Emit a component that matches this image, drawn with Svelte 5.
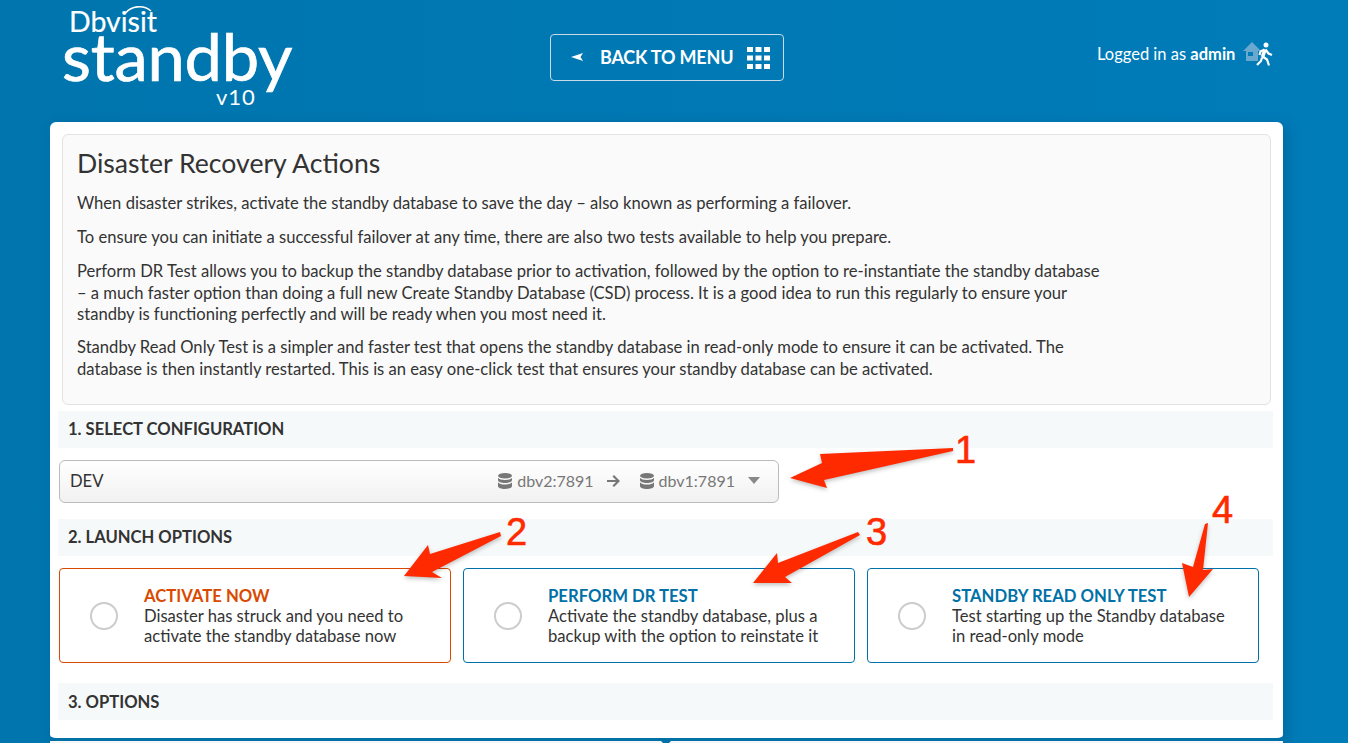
<script>
	const configs = [{ host: 'dbv2:7891' }, { host: 'dbv1:7891' }];

	const options = [
		{
			title: 'ACTIVATE NOW',
			lines: ['Disaster has struck and you need to', 'activate the standby database now'],
			danger: true
		},
		{
			title: 'PERFORM DR TEST',
			lines: ['Activate the standby database, plus a', 'backup with the option to reinstate it']
		},
		{
			title: 'STANDBY READ ONLY TEST',
			lines: ['Test starting up the Standby database', 'in read-only mode']
		}
	];

	const arrows = [
		'953,448 820,454 822,463 790,478 827,488 824,480 953,451',
		'500,532 430,554 428,545 404,576 442,578 432,572 501,536',
		'858,532 778,563 777,553 753,583 792,583 785,577 860,535',
		'1208,523 1203,570 1213,569 1189,597 1182,563 1193,567 1205,524'
	];
</script>

<div class="page">
	<header>
		<div class="logo">
			<div class="brand">Dbvisit</div>
			<svg class="swoosh" viewBox="0 0 28 10" width="28" height="10">
				<path d="M1 8.500C6 2.500 18 0 26 7" fill="none" stroke="#fff" stroke-width="1.600" />
			</svg>
			<div class="product">standby</div>
			<div class="version">v10</div>
		</div>

		<button class="back">
			<svg class="back-arrow" viewBox="0 0 12 8" width="12" height="8">
				<path d="M0 4 12 0 9.500 4 12 8z" fill="#fff" />
			</svg>
			<span>BACK TO MENU</span>
			<svg class="grid" viewBox="0 0 23 22" width="23" height="22" fill="#fff">
				{#each [0, 8.5, 17] as y}
					{#each [0, 8.5, 17] as x}
						<rect {x} {y} width="6" height="5" />
					{/each}
				{/each}
			</svg>
		</button>

		<div class="user">
			<span>Logged in as <b>admin</b></span>
			<svg viewBox="0 0 30 24" width="30" height="24">
				<path d="M0 9 9 0l9 9h-3v10H3V9zM5 10v4h5v-4z" fill="#6aa9cf" fill-rule="evenodd" />
				<circle cx="23" cy="3" r="2.500" fill="#fff" />
				<path d="M22 7.500 19.500 15" fill="none" stroke="#fff" stroke-width="3.600" />
				<path
					d="M19.500 14.500 24 17.500 26 23.500M19 15.500 18 19 14 23M21.500 7.500 17.500 9.500 16.500 13M22.500 7.500 25.500 11.500 29 13"
					fill="none"
					stroke="#fff"
					stroke-width="2.200"
				/>
			</svg>
		</div>
	</header>

	<main>
		<section class="intro">
			<h1>Disaster Recovery Actions</h1>
			<p>When disaster strikes, activate the standby database to save the day – also known as performing a failover.</p>
			<p>To ensure you can initiate a successful failover at any time, there are also two tests available to help you prepare.</p>
			<p class="long">Perform DR Test allows you to backup the standby database prior to activation, followed by the option to re-instantiate the standby database – a much faster option than doing a full new Create Standby Database (CSD) process. It is a good idea to run this regularly to ensure your standby is functioning perfectly and will be ready when you most need it.</p>
			<p>Standby Read Only Test is a simpler and faster test that opens the standby database in read-only mode to ensure it can be activated. The database is then instantly restarted. This is an easy one-click test that ensures your standby database can be activated.</p>
		</section>

		<h2>1. SELECT CONFIGURATION</h2>
		<div class="select">
			<span class="name">DEV</span>
			<div class="route">
				{#each configs as c, i}
					{#if i > 0}
						<svg class="to" viewBox="0 0 14 12" width="14" height="12">
							<path d="M0 5h9L5.500 1.500 7 0l6 6-6 6-1.500-1.500L9 7H0z" fill="#777" />
						</svg>
					{/if}
					<span class="host">
						<svg viewBox="0 0 14 16" width="14" height="16" fill="#777">
							<ellipse cx="7" cy="2.800" rx="7" ry="2.800" />
							<path d="M0 4.800v2.400c0 1.500 3.100 2.800 7 2.800s7-1.300 7-2.800V4.800C13 6.300 10.300 7 7 7S1 6.300 0 4.800z" />
							<path d="M0 9.300v3.700C0 14.700 3.100 16 7 16s7-1.300 7-3V9.300C13 10.800 10.300 11.600 7 11.600S1 10.800 0 9.300z" />
						</svg>
						{c.host}
					</span>
				{/each}
				<span class="caret"></span>
			</div>
		</div>

		<h2 class="launch">2. LAUNCH OPTIONS</h2>
		<div class="options">
			{#each options as o}
				<label class="option" class:danger={o.danger}>
					<span class="radio"></span>
					<span class="text">
						<strong>{o.title}</strong>
						{#each o.lines as line}
							<span>{line}</span>
						{/each}
					</span>
				</label>
			{/each}
		</div>

		<h2 class="extra">3. OPTIONS</h2>
	</main>
	<div class="next"><span class="notch"></span></div>

	<svg class="notes" viewBox="0 0 1348 743" width="1348" height="743">
		{#each arrows as points}
			<polygon {points} />
		{/each}
		<text x="955" y="463">1</text>
		<text x="506" y="545">2</text>
		<text x="866" y="545">3</text>
		<text x="1212" y="523">4</text>
	</svg>
</div>

<style>
	:global(html),
	:global(body) {
		margin: 0;
		height: 743px;
		overflow: hidden;
	}

	.page {
		position: relative;
		height: 743px;
		overflow: hidden;
		background: linear-gradient(90deg, #0075ae, #007cb9);
		font-family: Lato, 'Open Sans', sans-serif;
		font-size: 16.600px;
		color: #333;
	}

	header {
		display: flex;
		align-items: flex-start;
		height: 122px;
		color: #fff;
	}

	.logo {
		position: relative;
		width: 487px;
		height: 122px;
		margin-left: 63px;
		line-height: 1;
	}

	.brand {
		margin: 7px 0 0 6px;
		font-size: 28.500px;
		-webkit-text-stroke: 0.2px #fff;
	}

	.swoosh {
		position: absolute;
		top: 4px;
		left: 62px;
	}

	.product {
		margin: -10px 0 0 -1px;
		font-size: 66.800px;
		line-height: 58px;
		letter-spacing: -0.2px;
		-webkit-text-stroke: 0.7px #fff;
	}

	.version {
		margin: 2px 0 0 153px;
		font-size: 22px;
		letter-spacing: 1px;
	}

	.back {
		display: flex;
		align-items: center;
		box-sizing: border-box;
		width: 234px;
		height: 47px;
		margin-top: 34px;
		padding: 0 13px 2px 20px;
		background: none;
		border: 1px solid #c8dbe6;
		border-radius: 4px;
		color: #fff;
		font: 700 18px Lato, sans-serif;
		letter-spacing: -0.2px;
	}

	.back-arrow {
		margin-right: 17px;
	}

	.grid {
		margin-left: auto;
		margin-top: 2px;
	}

	.user {
		display: flex;
		align-items: center;
		gap: 8px;
		margin: 42px 0 0 313px;
		font-size: 16.500px;
	}

	.user span {
		margin-top: -1px;
	}

	main {
		box-sizing: border-box;
		width: 1233px;
		height: 619px;
		margin-left: 50px;
		padding: 12px 10px 0 8px;
		background: #fff;
		border-bottom: 3px solid #0071a7;
		border-radius: 6px;
		box-shadow: 4px 4px 14px rgba(0, 50, 80, 0.25);
	}

	.intro {
		box-sizing: border-box;
		height: 271px;
		margin: 0 2px 6px 4px;
		padding: 13px 14px;
		background: #fafafa;
		border: 1px solid #e3e3e3;
		border-radius: 6px;
	}

	h1 {
		margin: 0 0 15px;
		font-size: 26.600px;
		font-weight: 400;
		line-height: 30px;
	}

	p {
		max-width: 1030px;
		margin: 0 0 12.500px;
		line-height: 21.500px;
	}

	.long {
		margin-bottom: 11.500px;
	}

	h2 {
		margin: 0;
		padding: 0 10px;
		background: #f6f9fa;
		font-size: 16.600px;
		font-weight: 700;
		line-height: 37px;
	}

	.launch {
		margin-top: 16px;
	}

	.extra {
		margin-top: 20px;
		padding-top: 2px;
		line-height: 35px;
	}

	.select {
		display: flex;
		align-items: center;
		box-sizing: border-box;
		width: 720px;
		height: 43px;
		margin: 12px 0 0 1px;
		padding: 0 18px 2px 10px;
		background: linear-gradient(#fff, #f1f1f1);
		border: 1px solid #bbb;
		border-radius: 6px;
	}

	.route {
		display: flex;
		align-items: center;
		margin-left: auto;
		color: #777;
		font-size: 16px;
	}

	.host {
		display: flex;
		align-items: center;
		gap: 5px;
	}

	.to {
		margin: 0 19px 0 13px;
	}

	.caret {
		margin-left: 13px;
		border: 6px solid transparent;
		border-top: 7px solid #888;
		border-bottom: 0;
	}

	.options {
		display: flex;
		gap: 12px;
		margin: 12px 0 0 1px;
	}

	.option {
		display: flex;
		align-items: center;
		box-sizing: border-box;
		width: 392px;
		height: 95px;
		padding: 0 0 0 30px;
		border: 1px solid #0071a7;
		border-radius: 4px;
	}

	.radio {
		box-sizing: border-box;
		width: 28px;
		height: 28px;
		margin-right: 26px;
		border: 2px solid #ccc;
		border-radius: 50%;
	}

	.text {
		display: flex;
		flex-direction: column;
		line-height: 20px;
	}

	.text strong {
		color: #0071a7;
		font-size: 16.700px;
	}

	.danger {
		border-color: #d94a00;
	}

	.danger strong {
		color: #d94a00;
	}

	.next {
		position: relative;
		width: 1233px;
		height: 2px;
		margin-left: 50px;
		background: #f4f6f7;
	}

	.notch {
		position: absolute;
		top: 0;
		left: 611px;
		border: 5px solid transparent;
		border-top: 5px solid #0071a7;
		border-bottom: 0;
	}

	.notes {
		position: absolute;
		top: 0;
		left: 0;
		pointer-events: none;
	}

	.notes polygon {
		fill: #ff2a00;
		filter: drop-shadow(0 2px 2px rgba(0, 0, 0, 0.25));
	}

	.notes text {
		fill: #ff2a00;
		stroke: #ff2a00;
		stroke-width: 0.6px;
		font: 38px 'Liberation Sans', sans-serif;
	}
</style>
